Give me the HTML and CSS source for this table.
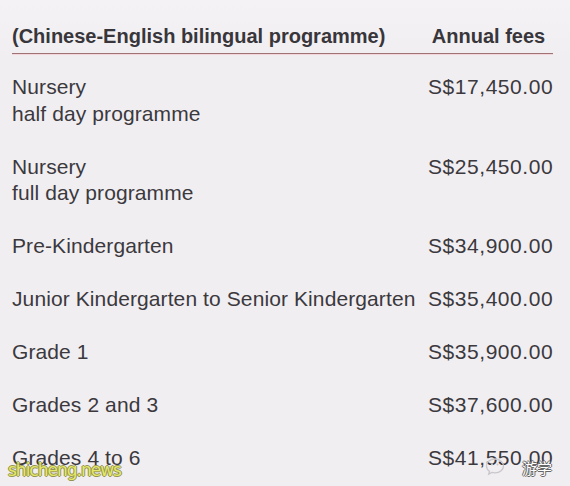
FILE: index.html
```html
<!DOCTYPE html>
<html>
<head>
<meta charset="utf-8">
<link rel="stylesheet" href="styles.css">
</head>
<body>
<div class="page">
  <div class="fees">
    <div class="head">
      <div class="head-prog">(Chinese-English bilingual programme)</div>
      <div class="head-fee">Annual fees</div>
    </div>
    <div class="rows">
      <div class="prog">Nursery<br>half day programme</div>
      <div class="amt">S$17,450.00</div>
      <div class="prog">Nursery<br>full day programme</div>
      <div class="amt">S$25,450.00</div>
      <div class="prog">Pre-Kindergarten</div>
      <div class="amt">S$34,900.00</div>
      <div class="prog">Junior Kindergarten to Senior Kindergarten</div>
      <div class="amt">S$35,400.00</div>
      <div class="prog">Grade 1</div>
      <div class="amt">S$35,900.00</div>
      <div class="prog">Grades 2 and 3</div>
      <div class="amt">S$37,600.00</div>
      <div class="prog">Grades 4 to 6</div>
      <div class="amt">S$41,550.00</div>
    </div>
  </div>
  <div class="wm-site">shicheng.news</div>
  <div class="wm-logo">
    <svg class="wm-icon" width="24" height="22" viewBox="0 0 24 22">
      <path d="M11 3c-5 0-8.5 3.2-8.5 7 0 2.2 1.1 4 3 5.3l-.8 2.8 3.2-1.7c1 .3 2 .4 3.1.4 5 0 8.5-3.2 8.5-6.8S16 3 11 3z" fill="none" stroke="#c9c6cc" stroke-width="1.3"/>
      <circle cx="8" cy="8.5" r="1" fill="#c9c6cc"/>
      <circle cx="13.5" cy="8.5" r="1" fill="#c9c6cc"/>
    </svg>
    <span class="wm-text">游学</span>
  </div>
</div>
</body>
</html>
```

FILE: styles.css
```css
html, body {
  margin: 0;
  padding: 0;
}
body {
  background: #f1eef2;
  font-family: "Liberation Sans", Arial, sans-serif;
  color: #3b393d;
}
.page {
  position: relative;
  width: 570px;
  height: 486px;
  overflow: hidden;
  background: linear-gradient(#f4f2f4 0, #f1eef2 60px);
}
.fees {
  width: 541px;
  padding: 23px 0 0 12px;
}
.head {
  display: grid;
  grid-template-columns: 416px 125px;
  font-size: 20px;
  line-height: 26.5px;
  font-weight: bold;
  color: #38363a;
  padding-bottom: 3px;
  border-bottom: 1px solid #a07276;
  box-shadow: 0 1px 0 #f3d6db;
}
.head-fee {
  text-align: center;
  padding-right: 4px;
}
.rows {
  display: grid;
  grid-template-columns: 416px 125px;
  row-gap: 26.5px;
  margin-top: 20.5px;
  font-size: 21px;
  line-height: 26.5px;
}
.prog {
  letter-spacing: 0.1px;
}
.amt {
  white-space: nowrap;
  letter-spacing: 0.55px;
}
.wm-site {
  position: absolute;
  left: 8px;
  top: 460px;
  font-family: "DejaVu Sans", sans-serif;
  font-size: 17px;
  letter-spacing: -1px;
  color: #e2e85a;
  text-shadow: -1px 0 0 #8a8a40, 1px 0 0 #8a8a40, 0 -1px 0 #8a8a40, 0 1px 0 #8a8a40;
  opacity: 0.9;
}
.wm-logo {
  position: absolute;
  left: 484px;
  top: 456px;
  display: flex;
  align-items: center;
  gap: 2px;
}
.wm-text {
  font-family: "Noto Sans CJK SC", sans-serif;
  font-size: 15px;
  color: #ffffff;
  text-shadow: -1px 0 0 #666, 1px 0 0 #666, 0 -1px 0 #666, 0 1px 0 #666;
  margin-left: 12px;
}
```
